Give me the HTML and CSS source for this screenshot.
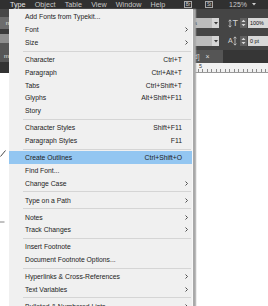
FILE: index.html
```html
<!DOCTYPE html>
<html>
<head>
<meta charset="utf-8">
<link rel="stylesheet" href="styles.css">
</head>
<body>
<div class="screen">
  <div class="menubar">
    <div class="mb-items">
      <span class="mb-item active">Type</span>
      <span class="mb-item">Object</span>
      <span class="mb-item">Table</span>
      <span class="mb-item">View</span>
      <span class="mb-item">Window</span>
      <span class="mb-item">Help</span>
    </div>
    <div class="mb-right">
      <span class="appbox">Br</span>
      <span class="appbox st">St</span>
      <span class="zoomval">125%</span>
      <svg class="zoomarrow" width="4" height="3" viewBox="0 0 4 3"><path d="M0 0H4L2 2.6Z" fill="#cfcfcf"/></svg>
    </div>
  </div>
  <div class="work">
    <div class="strip">
      <div class="s1"></div>
      <div class="s2">n</div>
      <div class="s3"></div>
      <div class="s4"></div>
      <div class="s5">m</div>
      <div class="s6"></div>
      <div class="s7"></div>
    </div>
    <div class="main">
      <div class="panel">
        <div class="controls">
          <div class="crow">
            <div class="field">s</div>
            <div class="ddbtn"><svg width="4" height="3" viewBox="0 0 4 3"><path d="M0 0H4L2 2.6Z" fill="#3a3a3a"/></svg></div>
            <div class="icon"><svg width="4" height="9" viewBox="0 0 4 9"><path d="M2 1V8M0.6 2.4L2 0.8L3.4 2.4M0.6 6.6L2 8.2L3.4 6.6" stroke="#d0d0d0" stroke-width="0.8" fill="none"/></svg><span class="ilet big">T</span></div>
            <div class="spin"><svg width="5" height="8" viewBox="0 0 5 8"><path d="M0.5 3L2.5 0.8L4.5 3ZM0.5 5L2.5 7.2L4.5 5Z" fill="#d8d8d8"/></svg></div>
            <div class="input">100%</div>
          </div>
          <div class="crow">
            <div class="field"></div>
            <div class="ddbtn"><svg width="4" height="3" viewBox="0 0 4 3"><path d="M0 0H4L2 2.6Z" fill="#3a3a3a"/></svg></div>
            <div class="icon"><span class="ilet">A</span><svg width="4" height="10" viewBox="0 0 4 10"><path d="M2 1V9M0.6 2.4L2 0.8L3.4 2.4M0.6 7.6L2 9.2L3.4 7.6" stroke="#d0d0d0" stroke-width="0.8" fill="none"/></svg></div>
            <div class="spin"><svg width="5" height="8" viewBox="0 0 5 8"><path d="M0.5 3L2.5 0.8L4.5 3ZM0.5 5L2.5 7.2L4.5 5Z" fill="#d8d8d8"/></svg></div>
            <div class="input">0 pt</div>
          </div>
        </div>
      </div>
      <div class="tabrow">
        <div class="tab"><span>d]</span><span class="tabx">×</span></div>
      </div>
      <div class="ruler"><span class="rnum">5</span></div>
      <div class="doc"></div>
    </div>
  </div>
  <svg class="mark m1" width="6" height="7" viewBox="0 0 6 7"><path d="M0.5 6.5L5.5 0.5" stroke="#333" stroke-width="0.9"/></svg>
  <svg class="mark m2" width="5" height="2" viewBox="0 0 5 2"><path d="M0 1H4.5" stroke="#777" stroke-width="0.9"/></svg>

  <div class="menu">
    <div class="mi"><span>Add Fonts from Typekit...</span><span></span><span></span></div>
    <div class="mi"><span>Font</span><span></span><span class="arr"><svg width="3" height="5" viewBox="0 0 3 5"><path d="M0.5 0.5L2.5 2.5L0.5 4.5" stroke="#3c3c3c" stroke-width="0.9" fill="none"/></svg></span></div>
    <div class="mi"><span>Size</span><span></span><span class="arr"><svg width="3" height="5" viewBox="0 0 3 5"><path d="M0.5 0.5L2.5 2.5L0.5 4.5" stroke="#3c3c3c" stroke-width="0.9" fill="none"/></svg></span></div>
    <div class="sep"></div>
    <div class="mi"><span>Character</span><span class="sc">Ctrl+T</span><span></span></div>
    <div class="mi"><span>Paragraph</span><span class="sc">Ctrl+Alt+T</span><span></span></div>
    <div class="mi"><span>Tabs</span><span class="sc">Ctrl+Shift+T</span><span></span></div>
    <div class="mi"><span>Glyphs</span><span class="sc">Alt+Shift+F11</span><span></span></div>
    <div class="mi"><span>Story</span><span></span><span></span></div>
    <div class="sep"></div>
    <div class="mi"><span>Character Styles</span><span class="sc">Shift+F11</span><span></span></div>
    <div class="mi"><span>Paragraph Styles</span><span class="sc">F11</span><span></span></div>
    <div class="sep"></div>
    <div class="mi hl"><span>Create Outlines</span><span class="sc">Ctrl+Shift+O</span><span></span></div>
    <div class="mi"><span>Find Font...</span><span></span><span></span></div>
    <div class="mi"><span>Change Case</span><span></span><span class="arr"><svg width="3" height="5" viewBox="0 0 3 5"><path d="M0.5 0.5L2.5 2.5L0.5 4.5" stroke="#3c3c3c" stroke-width="0.9" fill="none"/></svg></span></div>
    <div class="sep"></div>
    <div class="mi"><span>Type on a Path</span><span></span><span class="arr"><svg width="3" height="5" viewBox="0 0 3 5"><path d="M0.5 0.5L2.5 2.5L0.5 4.5" stroke="#3c3c3c" stroke-width="0.9" fill="none"/></svg></span></div>
    <div class="sep"></div>
    <div class="mi"><span>Notes</span><span></span><span class="arr"><svg width="3" height="5" viewBox="0 0 3 5"><path d="M0.5 0.5L2.5 2.5L0.5 4.5" stroke="#3c3c3c" stroke-width="0.9" fill="none"/></svg></span></div>
    <div class="mi"><span>Track Changes</span><span></span><span class="arr"><svg width="3" height="5" viewBox="0 0 3 5"><path d="M0.5 0.5L2.5 2.5L0.5 4.5" stroke="#3c3c3c" stroke-width="0.9" fill="none"/></svg></span></div>
    <div class="sep"></div>
    <div class="mi"><span>Insert Footnote</span><span></span><span></span></div>
    <div class="mi"><span>Document Footnote Options...</span><span></span><span></span></div>
    <div class="sep"></div>
    <div class="mi"><span>Hyperlinks &amp; Cross-References</span><span></span><span class="arr"><svg width="3" height="5" viewBox="0 0 3 5"><path d="M0.5 0.5L2.5 2.5L0.5 4.5" stroke="#3c3c3c" stroke-width="0.9" fill="none"/></svg></span></div>
    <div class="mi"><span>Text Variables</span><span></span><span class="arr"><svg width="3" height="5" viewBox="0 0 3 5"><path d="M0.5 0.5L2.5 2.5L0.5 4.5" stroke="#3c3c3c" stroke-width="0.9" fill="none"/></svg></span></div>
    <div class="sep"></div>
    <div class="mi"><span>Bulleted &amp; Numbered Lists</span><span></span><span class="arr"><svg width="3" height="5" viewBox="0 0 3 5"><path d="M0.5 0.5L2.5 2.5L0.5 4.5" stroke="#3c3c3c" stroke-width="0.9" fill="none"/></svg></span></div>
  </div>
</div>
</body>
</html>
```

FILE: styles.css
```css
html, body {
  margin: 0;
  padding: 0;
  background: #fff;
}

.screen {
  position: relative;
  width: 268px;
  height: 306px;
  overflow: hidden;
  background: #fff;
  font-family: "Liberation Sans", Arial, sans-serif;
}

/* top application menu bar */
.menubar {
  height: 9px;
  background: #303030;
  display: flex;
  align-items: center;
  color: #c8c8c8;
  font-size: 7.2px;
  line-height: 9px;
}

.mb-items {
  display: flex;
  gap: 9.2px;
  padding-left: 10px;
}

.mb-item.active {
  color: #e8e8e8;
}

.mb-right {
  margin-left: auto;
  display: flex;
  align-items: center;
  padding-right: 12px;
}

.appbox {
  box-sizing: border-box;
  width: 8px;
  height: 7px;
  border: 0.8px solid #a8a8a8;
  font-size: 4.6px;
  line-height: 5.5px;
  text-align: center;
  color: #d0d0d0;
}

.appbox.st {
  margin-left: 13px;
}

.zoomval {
  margin-left: 16px;
  font-size: 7px;
}

.zoomarrow {
  margin-left: 5px;
}

/* work area */
.work {
  display: flex;
  height: 297px;
}

.strip {
  width: 9px;
  display: flex;
  flex-direction: column;
  color: #e4e4e4;
  font-size: 6px;
  text-align: right;
  overflow: hidden;
}

.s1 { height: 8px; background: #484848; }
.s2 { height: 12px; background: #6c6c6c; line-height: 12px; }
.s3 { height: 5px; background: #3a3a3a; }
.s4 { height: 9px; background: #8e8e8e; }
.s5 { height: 19px; background: #565656; line-height: 27px; }
.s6 { height: 11px; background: #333; }
.s7 { flex: 1; background: #fff; }

.main {
  flex: 1;
  display: flex;
  flex-direction: column;
}

.panel {
  height: 41px;
  background: #454545;
  display: flex;
}

.controls {
  margin-left: auto;
  width: 76px;
  padding-top: 9px;
  display: flex;
  flex-direction: column;
  gap: 8px;
}

.crow {
  display: flex;
  height: 10px;
  align-items: center;
}

.field {
  width: 18px;
  height: 10px;
  padding-left: 2px;
  background: #bcbcbc;
  color: #222;
  font-size: 6px;
  line-height: 10px;
}

.ddbtn {
  width: 7px;
  height: 10px;
  background: #d6d6d6;
  display: flex;
  align-items: center;
  justify-content: center;
}

.icon {
  margin-left: 9px;
  width: 11px;
  height: 10px;
  display: flex;
  align-items: center;
  gap: 0.5px;
  color: #d4d4d4;
}

.ilet {
  font-size: 7px;
  line-height: 10px;
}

.ilet.big {
  font-size: 9px;
}

.spin {
  margin-left: 1px;
  width: 7px;
  height: 10px;
  background: #606060;
  display: flex;
  align-items: center;
  justify-content: center;
}

.input {
  margin-left: 1px;
  width: 18px;
  height: 10px;
  padding-left: 2px;
  background: #d8d8d8;
  color: #111;
  font-size: 5.4px;
  line-height: 10px;
  white-space: nowrap;
  overflow: hidden;
}

.tabrow {
  height: 13px;
  background: #363636;
  display: flex;
}

.tab {
  margin-left: 184px;
  width: 29px;
  background: #555;
  color: #dedede;
  font-size: 6.6px;
  line-height: 13px;
  display: flex;
  gap: 6px;
  padding-left: 1px;
}

.tabx {
  font-size: 7px;
}

.ruler {
  height: 10px;
  box-sizing: border-box;
  background-color: #f1f1f1;
  background-image: repeating-linear-gradient(to right, #8a8a8a 0 0.7px, transparent 0.7px 4.5px);
  background-size: 100% 3px;
  background-repeat: no-repeat;
  background-position: 0 100%;
  border-bottom: 0.6px solid #9a9a9a;
  padding-left: 190px;
  color: #333;
  font-size: 5.4px;
  line-height: 7px;
}

.doc {
  flex: 1;
  background: #fff;
}

.mark {
  position: absolute;
  left: 0;
}

.m1 { top: 150px; }
.m2 { top: 221px; }

/* dropdown menu */
.menu {
  position: absolute;
  left: 9px;
  top: 9px;
  width: 183px;
  height: 310px;
  box-sizing: border-box;
  padding-top: 1.6px;
  background: #f0f0f0;
  box-shadow: 1px 0 0 #f8f8f8, 3.5px 0 1.2px #a9a9a9;
  font-size: 6.8px;
  color: #1c1c1c;
}

.mi {
  display: grid;
  grid-template-columns: 1fr auto 10px;
  align-items: center;
  height: 12.8px;
  padding-left: 16px;
  white-space: nowrap;
}

.mi.hl {
  background: #93c6f1;
}

.sc {
  text-align: right;
}

.arr {
  display: flex;
  justify-content: flex-end;
  padding-right: 4px;
}

.sep {
  height: 4.2px;
  display: flex;
  align-items: center;
  margin-left: 14px;
  margin-right: 1px;
}

.sep::before {
  content: "";
  flex: 1;
  height: 1px;
  background: #d5d5d5;
}
```
